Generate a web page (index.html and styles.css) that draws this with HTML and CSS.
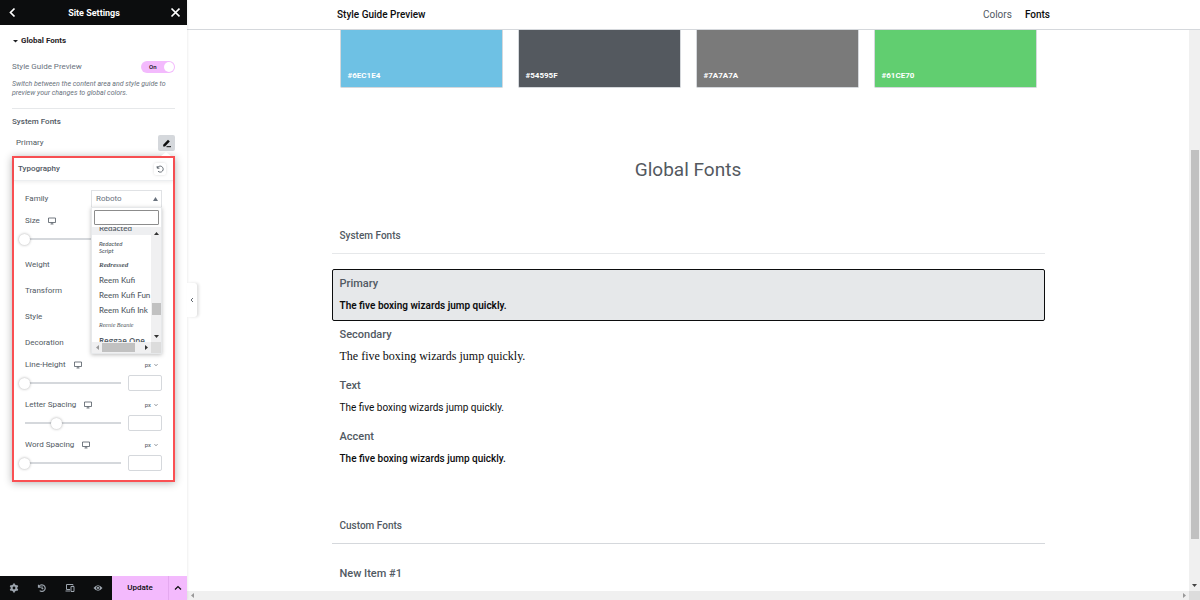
FILE: index.html
```html
<!DOCTYPE html>
<html lang="en">
<head>
<meta charset="utf-8">
<title>Site Settings</title>
<link rel="stylesheet" href="styles.css">
</head>
<body>
<svg class="defs" width="0" height="0" aria-hidden="true">
  <symbol id="monitor" viewBox="0 0 8 8"><path d="M.5 1h7v4.500h-7zM2.500 7h3M4 5.500V7" fill="none" stroke="currentColor" stroke-width=".8"/></symbol>
  <symbol id="down" viewBox="0 0 4 4"><path d="M.5 1.200 2 2.700 3.500 1.200" fill="none" stroke="currentColor" stroke-width=".7"/></symbol>
</svg>
<div class="app">
  <aside class="sidebar">
    <header class="side-head">
      <button class="icon-btn" aria-label="Back"><svg width="10" height="12" viewBox="0 0 10 12"><path d="M6.500 1.500 2.500 5.500l4 4" fill="none" stroke="currentColor" stroke-width="1.700"/></svg></button>
      <h1>Site Settings</h1>
      <button class="icon-btn" aria-label="Close"><svg width="10" height="12" viewBox="0 0 10 12"><path d="m1.500 1.500 8 8M9.500 1.500l-8 8" fill="none" stroke="currentColor" stroke-width="1.700"/></svg></button>
    </header>
    <div class="side-body">
      <button class="section-toggle"><svg width="5" height="4" viewBox="0 0 5 4"><path d="M0 1h5L2.500 3.500z" fill="currentColor"/></svg>Global Fonts</button>
      <div class="row preview-row">
        <label for="preview">Style Guide Preview</label>
        <span class="switch"><input type="checkbox" id="preview" checked><span class="on">On</span><span class="knob"></span></span>
      </div>
      <p class="hint">Switch between the content area and style guide to preview your changes to global colors.</p>
      <h2 class="group-title">System Fonts</h2>
      <div class="row primary-row">
        <span>Primary</span>
        <button class="edit" aria-label="Edit Primary"><svg width="10" height="10" viewBox="0 0 10 10"><path d="M1.200 8.500V6.700L6 1.800l1.800 1.800L3 8.500z" fill="currentColor"/><path d="M4.500 8.700H9" stroke="currentColor"/></svg></button>
      </div>
      <section class="panel">
        <header class="row panel-head">
          <h3>Typography</h3>
          <button class="reset" aria-label="Reset"><svg width="8" height="8" viewBox="0 0 8 8"><path d="M1.200 1v2.200h2.200M1.400 3A3 3 0 1 1 2 6.200" fill="none" stroke="currentColor" stroke-width=".9"/></svg></button>
        </header>
        <div class="panel-body">
          <div class="row field family">
            <label for="family">Family</label>
            <div class="combo">
              <button id="family" class="combo-btn" aria-expanded="true">Roboto<svg width="5" height="4" viewBox="0 0 5 4"><path d="M0 4h5L2.500 0z" fill="currentColor"/></svg></button>
              <div class="drop">
                <div class="search"><input type="text" aria-label="Search fonts"></div>
                <div class="list-wrap">
                  <ul class="fonts">
                    <li class="active">Redacted</li>
                    <li class="redacted">Redacted<br>Script</li>
                    <li class="redressed">Redressed</li>
                    <li>Reem Kufi</li>
                    <li>Reem Kufi Fun</li>
                    <li>Reem Kufi Ink</li>
                    <li class="hand">Reenie Beanie</li>
                    <li class="reggae">Reggae One</li>
                  </ul>
                  <div class="vbar"><svg width="5" height="3" viewBox="0 0 5 3"><path d="M0 3h5L2.500 0z"/></svg><i></i><svg width="5" height="3" viewBox="0 0 5 3"><path d="M0 0h5L2.500 3z"/></svg></div>
                </div>
                <div class="hbar"><svg class="dim" width="3" height="5" viewBox="0 0 3 5"><path d="M3 0v5L0 2.500z"/></svg><i></i><svg width="3" height="5" viewBox="0 0 3 5"><path d="M0 0v5l3-2.500z"/></svg><b></b></div>
              </div>
            </div>
          </div>
          <div class="unit-field size">
            <div class="caption"><label for="size">Size</label><svg width="8" height="8"><use href="#monitor"/></svg></div>
            <div class="controls"><div class="track"><input type="range" id="size" value="0"></div></div>
          </div>
          <div class="row field">Weight</div>
          <div class="row field">Transform</div>
          <div class="row field">Style</div>
          <div class="row field">Decoration</div>
          <div class="unit-field">
            <div class="caption"><label for="lh">Line-Height</label><svg width="8" height="8"><use href="#monitor"/></svg><button class="unit">px<svg width="4" height="4"><use href="#down"/></svg></button></div>
            <div class="controls"><div class="track"><input type="range" id="lh" value="0"></div><input class="num" type="text" aria-label="Line height value"></div>
          </div>
          <div class="unit-field">
            <div class="caption"><label for="ls">Letter Spacing</label><svg width="8" height="8"><use href="#monitor"/></svg><button class="unit">px<svg width="4" height="4"><use href="#down"/></svg></button></div>
            <div class="controls"><div class="track"><input type="range" id="ls" value="33"></div><input class="num" type="text" aria-label="Letter spacing value"></div>
          </div>
          <div class="unit-field">
            <div class="caption"><label for="ws">Word Spacing</label><svg width="8" height="8"><use href="#monitor"/></svg><button class="unit">px<svg width="4" height="4"><use href="#down"/></svg></button></div>
            <div class="controls"><div class="track"><input type="range" id="ws" value="0"></div><input class="num" type="text" aria-label="Word spacing value"></div>
          </div>
        </div>
      </section>
    </div>
    <footer class="side-foot">
      <button aria-label="Settings"><svg width="10" height="10" viewBox="0 0 10 10"><circle cx="5" cy="5" r="2.400" fill="none" stroke="currentColor" stroke-width="2"/><path d="M5 .6v1.600M5 7.800v1.600M1.200 2.800l1.400.8M7.400 6.400l1.400.8M1.200 7.200l1.400-.8M7.400 3.600l1.400-.8" stroke="currentColor" stroke-width="1.800"/></svg></button>
      <button aria-label="History"><svg width="10" height="10" viewBox="0 0 10 10"><path d="M1.500 1.800v2.400h2.400M1.800 4A3.300 3.300 0 1 1 2.700 7.600M5 3.300v2l1.300.8" fill="none" stroke="currentColor" stroke-width="1.200"/></svg></button>
      <button aria-label="Responsive mode"><svg width="10" height="10" viewBox="0 0 10 10"><path d="M8 2.500v-1H1.500v5H5M.5 8H5M6 3.500h3v5H6z" fill="none" stroke="currentColor"/></svg></button>
      <button aria-label="Preview"><svg width="10" height="10" viewBox="0 0 10 10"><path d="M.5 5Q5-.6 9.500 5 5 10.600.5 5z" fill="currentColor"/><circle cx="5" cy="4.900" r="1.900" fill="#0c0d0e"/><circle cx="5" cy="4.900" r="1.100" fill="currentColor"/></svg></button>
      <button class="update">Update</button>
      <button class="more" aria-label="Save options"><svg width="8" height="6" viewBox="0 0 8 6"><path d="M1 4.500 4 1.500l3 3" fill="none" stroke="currentColor" stroke-width="1.200"/></svg></button>
    </footer>
    <button class="collapse" aria-label="Hide panel"><svg width="4" height="6" viewBox="0 0 4 6"><path d="M3 1 1 3l2 2" fill="none" stroke="currentColor" stroke-width=".9"/></svg></button>
  </aside>
  <main class="stage">
    <header class="stage-head">
      <div class="wrap head-inner">
        <strong>Style Guide Preview</strong>
        <nav><a href="#colors">Colors</a><a href="#fonts" class="current">Fonts</a></nav>
      </div>
    </header>
    <div class="viewport">
      <div class="content">
        <div class="wrap">
          <div class="swatches" id="colors">
            <div class="swatch blue">#6EC1E4</div>
            <div class="swatch slate">#54595F</div>
            <div class="swatch gray">#7A7A7A</div>
            <div class="swatch green">#61CE70</div>
          </div>
          <h2 class="title" id="fonts">Global Fonts</h2>
          <h3 class="sub light">System Fonts</h3>
          <div class="item selected"><h4>Primary</h4><p class="semibold">The five boxing wizards jump quickly.</p></div>
          <div class="item"><h4>Secondary</h4><p class="slab">The five boxing wizards jump quickly.</p></div>
          <div class="item"><h4>Text</h4><p>The five boxing wizards jump quickly.</p></div>
          <div class="item"><h4>Accent</h4><p class="medium">The five boxing wizards jump quickly.</p></div>
          <h3 class="sub custom">Custom Fonts</h3>
          <div class="item"><h4>New Item #1</h4></div>
        </div>
      </div>
      <div class="scroll-y"><i></i><svg width="5" height="3" viewBox="0 0 5 3"><path d="M0 0h5L2.500 3z"/></svg></div>
    </div>
    <div class="scroll-x"><svg width="3" height="5" viewBox="0 0 3 5"><path d="M3 0v5L0 2.500z"/></svg><svg width="3" height="5" viewBox="0 0 3 5"><path d="M0 0v5l3-2.500z"/></svg><b></b></div>
  </main>
</div>
</body>
</html>
```

FILE: styles.css
```css
* { box-sizing: border-box; }
body { margin: 0; font-family: Roboto, sans-serif; background: #fff; color: #515962; }
h1, h2, h3, h4, p, ul { margin: 0; padding: 0; }
button { border: 0; padding: 0; background: none; font: inherit; color: inherit; display: flex; align-items: center; justify-content: center; }
input { font: inherit; margin: 0; }
a { color: inherit; text-decoration: none; }
svg { display: block; flex: none; }
.defs { position: absolute; }

.app { display: flex; height: 100vh; }

/* Sidebar */
.sidebar { position: relative; z-index: 1; flex: none; width: 187px; display: flex; flex-direction: column; background: #fff; font-size: 8px; line-height: 10px; box-shadow: 0 0 3px rgba(0, 0, 0, .12); }
.side-head { display: flex; align-items: center; justify-content: space-between; height: 25px; padding: 0 7px 0 8px; background: #0c0d0e; color: #fff; }
.side-head h1 { font-size: 9px; font-weight: 700; }
.side-body { flex: 1; padding: 11px 12px 0; }
.row { display: flex; align-items: center; justify-content: space-between; }
.section-toggle { gap: 3px; height: 10px; font-weight: 700; color: #1f2124; padding-left: 1px; }
.preview-row { margin-top: 15px; height: 12px; color: #69727d; }
.switch { position: relative; display: flex; align-items: center; width: 34px; height: 12px; border-radius: 6px; background: #f3bafd; }
.switch input { position: absolute; inset: 0; width: 100%; height: 100%; opacity: 0; }
.on { margin-left: 8px; font-size: 6px; font-weight: 500; color: #0c0d0e; }
.knob { position: absolute; right: 1px; top: 1px; width: 10px; height: 10px; border-radius: 50%; background: #fff; }
.hint { margin-top: 7px; padding-bottom: 10px; border-bottom: 1px solid #e6e8ea; font-size: 7px; line-height: 9px; font-style: italic; color: #69727d; }
.group-title { margin-top: 8px; font-size: 8px; font-weight: 500; }
.primary-row { margin-top: 8px; padding-left: 4px; height: 16px; }
.edit { width: 17px; height: 16px; border-radius: 2px; background: #d5d8dc; color: #0c0d0e; }

.panel { position: relative; margin-top: 5px; border: 2px solid #fa5053; background: #fff; box-shadow: 0 1px 8px rgba(0, 0, 0, .3); }
.panel::before { content: ""; position: absolute; right: 2px; top: -6px; border: 5px solid transparent; border-top: 0; border-bottom: 4px solid #fff; }
.panel-head { height: 23px; padding: 0 7px 0 4px; border-bottom: 1px solid #eceef0; box-shadow: 0 1px 4px rgba(0, 0, 0, .08); }
.panel-head h3 { font-size: 8px; font-weight: 500; }
.reset { width: 12px; height: 12px; border-radius: 2px; box-shadow: 0 0 3px rgba(0, 0, 0, .15); }
.panel-body { padding: 9px 11px; }
.field { height: 18px; margin-bottom: 8px; }
.combo { position: relative; width: 71px; }
.combo-btn { width: 100%; height: 18px; padding: 0 3px 0 4px; justify-content: space-between; border: 1px solid #e0e2e5; color: #69727d; }
.drop { position: absolute; z-index: 2; top: 17px; left: 0; right: 0; background: #fff; border: 1px solid #e6e8ea; box-shadow: 0 1px 4px rgba(0, 0, 0, .25); }
.search { padding: 2px; }
.search input { display: block; width: 100%; height: 15px; border: 1px solid #8c8c8c; border-radius: 1px; }
.list-wrap { display: flex; height: 115px; background: #f0f0f1; overflow: hidden; }
.fonts { flex: 1; height: 115px; overflow: hidden; list-style: none; font-family: Lato, sans-serif; line-height: 15px; white-space: nowrap; background: #fff; }
.fonts li { height: 15px; padding-left: 7px; font-weight: 500; }
.fonts .active { height: 8px; line-height: 2px; overflow: hidden; background: #eeeff1; }
.fonts .redacted { height: 23px; padding-top: 5px; font-size: 6px; line-height: 7px; font-style: italic; }
.fonts .redressed { font-family: "Liberation Serif", serif; font-size: 7px; font-style: italic; font-weight: 700; }
.fonts .hand { font-family: "Liberation Serif", serif; font-size: 6px; font-style: italic; }
.fonts .reggae { font-family: "Open Sans", sans-serif; font-weight: 600; }
.vbar { width: 10px; display: flex; flex-direction: column; align-items: center; padding: 5px 0 4px; fill: #333; background: #f0f0f1; }
.vbar i { width: 9px; height: 12px; margin: auto 0 20px; background: #c1c1c1; }
.hbar { display: flex; align-items: center; height: 11px; padding-left: 4px; background: #f0f0f1; fill: #333; }
.hbar i { width: 33px; height: 9px; margin: 0 10px 0 3px; background: #c1c1c1; }
.hbar b { width: 10px; height: 11px; margin-left: auto; background: #dcdcdc; }
.dim { fill: #999; }

.unit-field { margin-bottom: 9px; }
.caption { display: flex; align-items: center; height: 10px; }
.caption > svg { margin-left: 8px; }
.unit { margin-left: auto; padding-right: 4px; gap: 3px; font-size: 6px; }
.controls { display: grid; grid-template-columns: minmax(0, 1fr) 34px; gap: 7px; align-items: center; height: 16px; margin-top: 5px; }
.track { height: 2px; display: flex; align-items: center; background: #d5d8dc; }
.track input { flex: 1; min-width: 0; height: 11px; margin: 0 -6px; appearance: none; background: none; }
.track input::-webkit-slider-thumb { appearance: none; width: 11px; height: 11px; border-radius: 50%; background: #fff; box-shadow: 0 0 3px rgba(0, 0, 0, .35); }
.num { width: 100%; height: 16px; border: 1px solid #d5d8dc; border-radius: 2px; }
.unit-field:last-child { margin-bottom: 0; }

.side-foot { display: grid; grid-template-columns: repeat(4, 28px) 1fr 19px; height: 24px; background: #0c0d0e; color: #9da5ae; }
.side-foot .update, .side-foot .more { background: #f3bafd; color: #0c0d0e; font-weight: 500; }
.side-foot .more { border-left: 1px solid #e4a9ef; }
.collapse { position: absolute; left: 100%; top: 283px; width: 10px; height: 34px; border-radius: 0 3px 3px 0; background: #fff; box-shadow: 2px 0 3px rgba(0, 0, 0, .12); }

/* Preview */
.stage { flex: 1; min-width: 0; display: flex; flex-direction: column; }
.wrap { max-width: 713px; margin: 0 auto; }
.stage-head { flex: none; height: 30px; border-bottom: 1px solid #d5d8dc; font-size: 10px; line-height: 29px; }
.head-inner { display: flex; justify-content: space-between; }
.head-inner strong { font-weight: 500; color: #0c0d0e; }
.head-inner nav { display: flex; gap: 13px; font-weight: 400; }
.head-inner .current { color: #0c0d0e; font-weight: 500; }
.viewport { flex: 1; min-height: 0; display: flex; }
.content { flex: 1; overflow: hidden; }
.swatches { display: grid; grid-template-columns: repeat(4, 1fr); gap: 15px; padding: 0 8px; }
.swatch { display: flex; align-items: flex-end; height: 58px; padding: 0 7px 6px; border: 1px solid #d5d8dc; border-top: 0; border-radius: 0 0 2px 2px; color: #fff; font-size: 8px; line-height: 10px; font-weight: 700; }
.blue { background: #6ec1e4; }
.slate { background: #54595f; }
.gray { background: #7a7a7a; }
.green { background: #61ce70; }
.title { margin-top: 70px; text-align: center; font-size: 19px; line-height: 24px; font-weight: 400; color: #54595f; }
.sub { margin: 46px 0 15px; padding: 0 8px 9px; border-bottom: 1px solid #d5d8dc; font-size: 10px; line-height: 16px; font-weight: 500; }
.light { border-color: #e6e8ea; }
.custom { margin-top: 44px; }
.item { padding: 6px 8px 6px 7px; border: 1px solid transparent; border-radius: 2px; color: #0c0d0e; }
.item + .item { margin-top: -1px; }
.item h4 { font-size: 11px; line-height: 16px; font-weight: 500; color: #515962; }
.item p { margin-top: 5px; font-size: 10px; line-height: 17px; }
.selected { border-color: #0c0d0e; background: #e6e8ea; }
.item .semibold { font-weight: 600; }
.item .medium { font-weight: 500; }
.item .slab { font-family: "Roboto Slab", "Liberation Serif", serif; font-size: 12px; }
.scroll-y { flex: none; width: 11px; display: flex; flex-direction: column; align-items: center; padding: 120px 0 4px; background: #f0f0f0; fill: #444; }
.scroll-y i { width: 8px; height: 389px; margin-bottom: auto; background: #c1c1c1; }
.scroll-x { flex: none; height: 9px; display: flex; align-items: center; padding-left: 4px; background: #f0f0f0; fill: #999; }
.scroll-x svg + svg { margin-left: auto; }
.scroll-x b { width: 11px; height: 9px; margin-left: 3px; background: #dcdcdc; }
```
